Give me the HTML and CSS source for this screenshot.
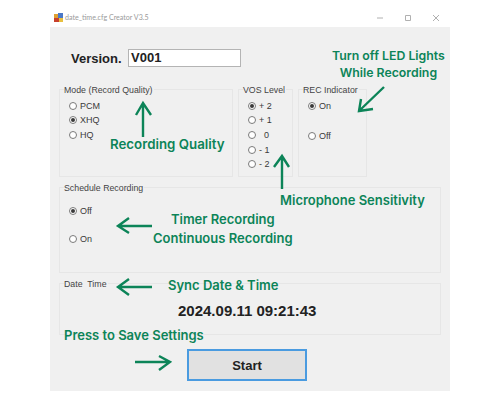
FILE: index.html
```html
<!DOCTYPE html>
<html lang="en">
<head>
  <meta charset="UTF-8" />
  <title>date_time.cfg Creator V3.5</title>
  <link rel="stylesheet" href="styles.css">
</head>
<body>

<div class="page">
  <div class="window">
    <div class="titlebar">
      <svg class="app-icon" width="9" height="9" viewBox="0 0 9 9">
        <rect x="0" y="1" width="5" height="4" fill="#e0a030"/>
        <rect x="4" y="0" width="5" height="5" fill="#4a78c8"/>
        <rect x="0" y="5" width="5" height="4" fill="#c8402c"/>
        <rect x="5" y="5" width="4" height="4" fill="#e8c040"/>
      </svg>
      <span class="title-text">date_time.cfg Creator V3.5</span>
      <div class="controls">
        <svg width="8" height="8" viewBox="0 0 8 8"><path d="M1 4h6" stroke="#b0b0b0" fill="none"/></svg>
        <svg width="8" height="8" viewBox="0 0 8 8"><path d="M1.5 1.5h5v5h-5z" stroke="#b0b0b0" fill="none"/></svg>
        <svg width="8" height="8" viewBox="0 0 8 8"><path d="M1 1l6 6M7 1l-6 6" stroke="#b0b0b0" fill="none"/></svg>
      </div>
    </div>

    <div class="panel">
      <div class="version-row">
        <span class="version-label">Version.</span>
        <div class="version-input">V001</div>
      </div>

      <div class="top-groups">
        <div class="group group-mode">
          <div class="group-title">Mode (Record Quality)</div>
          <div class="options">
            <div class="option"><span class="radio"></span>PCM</div>
            <div class="option"><span class="radio checked"></span>XHQ</div>
            <div class="option"><span class="radio"></span>HQ</div>
          </div>
        </div>

        <div class="group group-vos">
          <div class="group-title">VOS Level</div>
          <div class="options">
            <div class="option"><span class="radio checked"></span>+ 2</div>
            <div class="option"><span class="radio"></span>+ 1</div>
            <div class="option"><span class="radio"></span><span class="zero">0</span></div>
            <div class="option"><span class="radio"></span>- 1</div>
            <div class="option"><span class="radio"></span>- 2</div>
          </div>
        </div>

        <div class="group group-rec">
          <div class="group-title">REC Indicator</div>
          <div class="options wide">
            <div class="option"><span class="radio checked"></span>On</div>
            <div class="option"><span class="radio"></span>Off</div>
          </div>
        </div>
      </div>

      <div class="group group-schedule">
        <div class="group-title">Schedule Recording</div>
        <div class="options wider">
          <div class="option"><span class="radio checked"></span>Off</div>
          <div class="option"><span class="radio"></span>On</div>
        </div>
      </div>

      <div class="group group-date">
        <div class="group-title">Date&nbsp; Time</div>
        <div class="clock">2024.09.11 09:21:43</div>
      </div>

      <button class="start">Start</button>
    </div>
  </div>

  <!-- green notes on top of the screenshot -->
  <svg class="arrows" width="500" height="400" viewBox="0 0 500 400">
    <path d="M143 137V103M136 115l7-12 8 12"/>
    <path d="M282 189V156M274 167l8-11 7 11"/>
    <path d="M384 87L359 111M361 99l-2 12 14-2"/>
    <path d="M152 226H118M129 218l-11 8 11 7"/>
    <path d="M152 287H118M129 279l-11 8 11 8"/>
    <path d="M135 362H170M159 356l11 6-11 8"/>
  </svg>
  <div class="note note-led">Turn off LED Lights<br>While Recording</div>
  <div class="note note-quality">Recording Quality</div>
  <div class="note note-mic">Microphone Sensitivity</div>
  <div class="note note-timer">Timer Recording<br>Continuous Recording</div>
  <div class="note note-sync">Sync Date &amp; Time</div>
  <div class="note note-save">Press to Save Settings</div>
</div>

</body>
</html>
```

FILE: styles.css
```css
body {
  margin: 0;
  background: #ffffff;
  font-family: "Liberation Sans", Arial, sans-serif;
}

.page {
  position: relative;
  width: 500px;
  height: 400px;
  overflow: hidden;
}

.window {
  width: 400px;
  margin-left: 50px;
  padding-top: 8px;
}

.titlebar {
  display: flex;
  align-items: center;
  height: 19px;
  padding-left: 4px;
}

.app-icon {
  margin-right: 2px;
}

.title-text {
  font-family: Lato, sans-serif;
  font-size: 7.1px;
  color: #9a9a9a;
}

.controls {
  display: flex;
  gap: 20px;
  margin-left: auto;
  margin-right: 10px;
}

.panel {
  height: 364px;
  padding: 0 9px;
  box-sizing: border-box;
  background: #f0f0f0;
}

.version-row {
  display: flex;
  align-items: center;
  padding-top: 22px;
  padding-left: 12px;
}

.version-label {
  width: 57px;
  font-size: 13px;
  font-weight: bold;
  color: #222222;
}

.version-input {
  width: 109px;
  height: 16px;
  padding-left: 2px;
  border: 1px solid #b4b4b4;
  background: #ffffff;
  font-size: 13px;
  font-weight: bold;
  line-height: 16px;
  color: #222222;
}

.top-groups {
  display: flex;
  gap: 5px;
  margin-top: 22px;
}

.group {
  box-sizing: border-box;
  border: 1px solid #e6e6e6;
  font-size: 9px;
  color: #3a3a3a;
}

.group-title {
  margin: -6px 0 0 4px;
  width: fit-content;
  padding-right: 1px;
  background: #f0f0f0;
  font-size: 8.8px;
  line-height: 13px;
  color: #444444;
}

.group-mode {
  width: 174px;
  height: 88px;
}

.group-vos {
  width: 55px;
  height: 88px;
}

.group-rec {
  width: 69px;
  height: 88px;
}

.options {
  display: flex;
  flex-direction: column;
  gap: 4.7px;
  padding: 3.5px 0 0 9px;
}

.options.wide {
  gap: 20px;
}

.options.wider {
  gap: 18px;
  padding-top: 11px;
}

.option {
  display: flex;
  align-items: center;
  height: 10px;
  line-height: 10px;
}

.radio {
  box-sizing: border-box;
  display: flex;
  align-items: center;
  justify-content: center;
  width: 8px;
  height: 8px;
  margin-right: 3px;
  border: 1px solid #7a7a7a;
  border-radius: 50%;
  background: #ffffff;
}

.radio.checked::after {
  content: "";
  width: 4px;
  height: 4px;
  border-radius: 50%;
  background: #3a3a3a;
}

.zero {
  margin-left: 5px;
}

.group-schedule {
  height: 86px;
  margin-top: 10px;
}

.group-date {
  height: 52px;
  margin-top: 10px;
}

.clock {
  margin-top: 11px;
  padding-left: 118px;
  font-size: 15px;
  font-weight: bold;
  line-height: 17px;
  color: #222222;
}

.start {
  display: block;
  width: 120px;
  height: 32px;
  margin: 14px 0 0 128px;
  border: 2px solid #4a9be0;
  background: #e1e1e1;
  font-family: inherit;
  font-size: 13px;
  font-weight: bold;
  color: #222222;
}

.arrows {
  position: absolute;
  left: 0;
  top: 0;
}

.arrows path {
  fill: none;
  stroke: #0c8458;
  stroke-width: 2.4;
}

.note {
  position: absolute;
  font-family: Inter, sans-serif;
  font-size: 13px;
  font-weight: 600;
  line-height: 17px;
  color: #0c8458;
  text-align: center;
  white-space: nowrap;
}

.note-led {
  left: 332px;
  top: 47px;
  font-size: 12.3px;
}

.note-quality {
  left: 110px;
  top: 136px;
  font-size: 13.3px;
}

.note-mic {
  left: 280px;
  top: 192px;
}

.note-timer {
  left: 153px;
  top: 210px;
  line-height: 19px;
}

.note-sync {
  left: 168px;
  top: 277px;
}

.note-save {
  left: 64px;
  top: 327px;
}
```
